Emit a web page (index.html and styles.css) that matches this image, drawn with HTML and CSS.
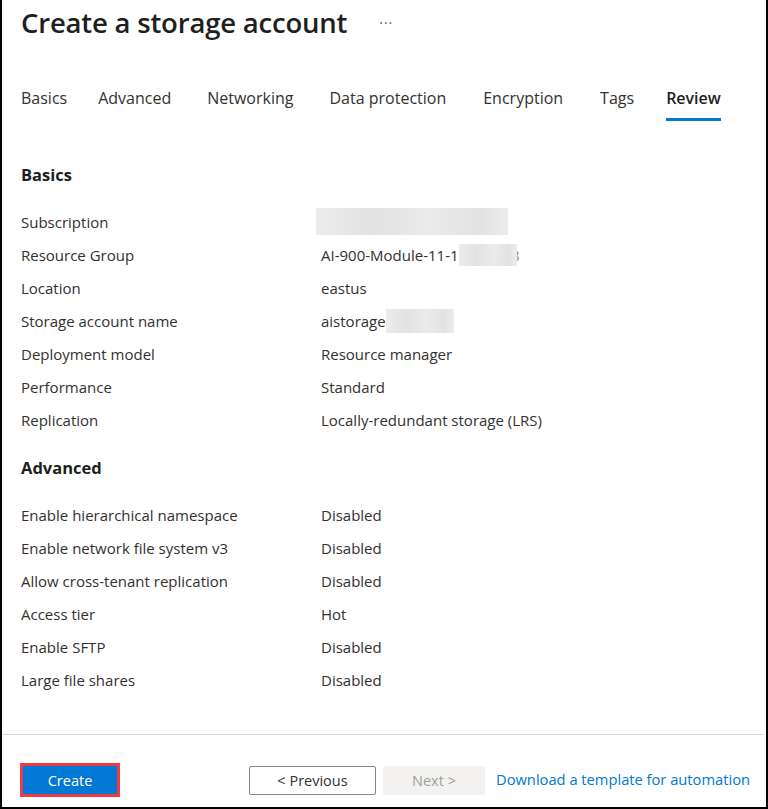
FILE: index.html
```html
<!DOCTYPE html>
<html>
<head>
<meta charset="utf-8">
<link rel="stylesheet" href="styles.css">
</head>
<body>
<div class="frame">
  <div class="content">
    <header class="head">
      <h1 class="title">Create a storage account</h1>
      <span class="more">···</span>
    </header>
    <nav class="tabs">
      <span class="tab">Basics</span>
      <span class="tab">Advanced</span>
      <span class="tab">Networking</span>
      <span class="tab">Data protection</span>
      <span class="tab">Encryption</span>
      <span class="tab">Tags</span>
      <span class="tab active">Review</span>
    </nav>

    <section class="section">
      <h2 class="sec-title">Basics</h2>
      <div class="row"><span class="label">Subscription</span><span class="value"><span class="blur blur-sub"></span></span></div>
      <div class="row"><span class="label">Resource Group</span><span class="value">AI-900-Module-11-1<span class="blur blur-rg"></span><span class="cut">8</span></span></div>
      <div class="row"><span class="label">Location</span><span class="value">eastus</span></div>
      <div class="row"><span class="label">Storage account name</span><span class="value">aistorage<span class="blur blur-sa"></span></span></div>
      <div class="row"><span class="label">Deployment model</span><span class="value">Resource manager</span></div>
      <div class="row"><span class="label">Performance</span><span class="value">Standard</span></div>
      <div class="row"><span class="label">Replication</span><span class="value">Locally-redundant storage (LRS)</span></div>
    </section>

    <section class="section">
      <h2 class="sec-title">Advanced</h2>
      <div class="row"><span class="label">Enable hierarchical namespace</span><span class="value">Disabled</span></div>
      <div class="row"><span class="label">Enable network file system v3</span><span class="value">Disabled</span></div>
      <div class="row"><span class="label">Allow cross-tenant replication</span><span class="value">Disabled</span></div>
      <div class="row"><span class="label">Access tier</span><span class="value">Hot</span></div>
      <div class="row"><span class="label">Enable SFTP</span><span class="value">Disabled</span></div>
      <div class="row"><span class="label">Large file shares</span><span class="value">Disabled</span></div>
    </section>
  </div>

  <footer class="footer">
    <span class="create-wrap"><button class="btn btn-primary">Create</button></span>
    <button class="btn btn-default">&lt; Previous</button>
    <button class="btn btn-disabled">Next &gt;</button>
    <a class="link" href="#">Download a template for automation</a>
  </footer>
</div>
</body>
</html>
```

FILE: styles.css
```css
* { box-sizing: border-box; }
html, body { margin: 0; padding: 0; background: #fff; }
body {
  font-family: "Open Sans", "Noto Sans", sans-serif;
  color: #323130;
  width: 768px;
  height: 809px;
  overflow: hidden;
}
.frame {
  width: 768px;
  height: 809px;
  border-left: 2px solid #000;
  border-right: 2px solid #000;
  border-bottom: 2px solid #000;
  display: flex;
  flex-direction: column;
}
.content {
  flex: 1;
  padding: 0 0 0 19px;
}
.head {
  display: flex;
  align-items: center;
  height: 44px;
}
.title {
  margin: 0;
  font-size: 27.5px;
  font-weight: 600;
  color: #201f1e;
  letter-spacing: -0.2px;
}
.more {
  margin-left: 32px;
  font-size: 14px;
  color: #605e5c;
  letter-spacing: 1px;
}
.tabs {
  display: flex;
  margin-top: 43px;
  align-items: flex-start;
}
.tab {
  font-size: 16px;
  line-height: 22px;
  padding-bottom: 9px;
  margin-right: 36px;
  color: #323130;
  border-bottom: 3px solid transparent;
}
.tab:first-child { margin-right: 31px; }
.tab:nth-child(4) { margin-right: 37px; }
.tab:nth-child(5) { margin-right: 37px; }
.tab:nth-child(6) { margin-right: 32px; }
.tab.active {
  font-weight: 600;
  color: #201f1e;
  border-bottom-color: #0078d4;
}
.section { margin-top: 42px; }
.section + .section { margin-top: 20px; }
.sec-title {
  margin: 0 0 18px 0;
  font-size: 16.5px;
  font-weight: 700;
  color: #201f1e;
  line-height: 24px;
}
.row {
  display: flex;
  align-items: center;
  height: 33px;
  font-size: 15px;
}
.label { width: 300px; color: #323130; }
.value { color: #323130; display: inline-flex; align-items: center; }
.blur {
  display: inline-block;
  background: linear-gradient(90deg, #ececec, #e2e2e2 30%, #ebebeb 60%, #e2e2e2 85%, #ececec);
}
.blur-sub { width: 192px; height: 27px; margin-left: -5px; }
.blur-rg { width: 58px; height: 22px; }
.blur-sa { width: 68px; height: 24px; }
.cut { display: inline-block; width: 3px; overflow: hidden; color: #8a8886; direction: rtl; }
.footer {
  border-top: 1px solid #d6d6d6;
  height: 73px;
  display: flex;
  align-items: flex-start;
  padding: 28px 0 0 18px;
  margin-right: 2px;
}
.create-wrap {
  border: 3px solid #f03a45;
  display: inline-flex;
  margin-right: 129px;
}
.btn {
  font-family: inherit;
  font-size: 14.5px;
  height: 28px;
  border-radius: 2px;
  padding: 0;
  cursor: pointer;
}
.btn-primary {
  background: #0078d4;
  color: #fff;
  border: none;
  width: 94px;
  border-radius: 0;
}
.btn-default {
  background: #fff;
  color: #323130;
  border: 1px solid #8a8886;
  width: 127px;
  height: 29px;
  margin-top: 3px;
  margin-right: 7px;
}
.btn-disabled {
  background: #f3f2f1;
  color: #a19f9d;
  border: none;
  width: 102px;
  height: 29px;
  margin-top: 3px;
  margin-right: 11px;
}
.link {
  color: #0078d4;
  text-decoration: none;
  font-size: 14.7px;
  margin-top: 6px;
}
```
